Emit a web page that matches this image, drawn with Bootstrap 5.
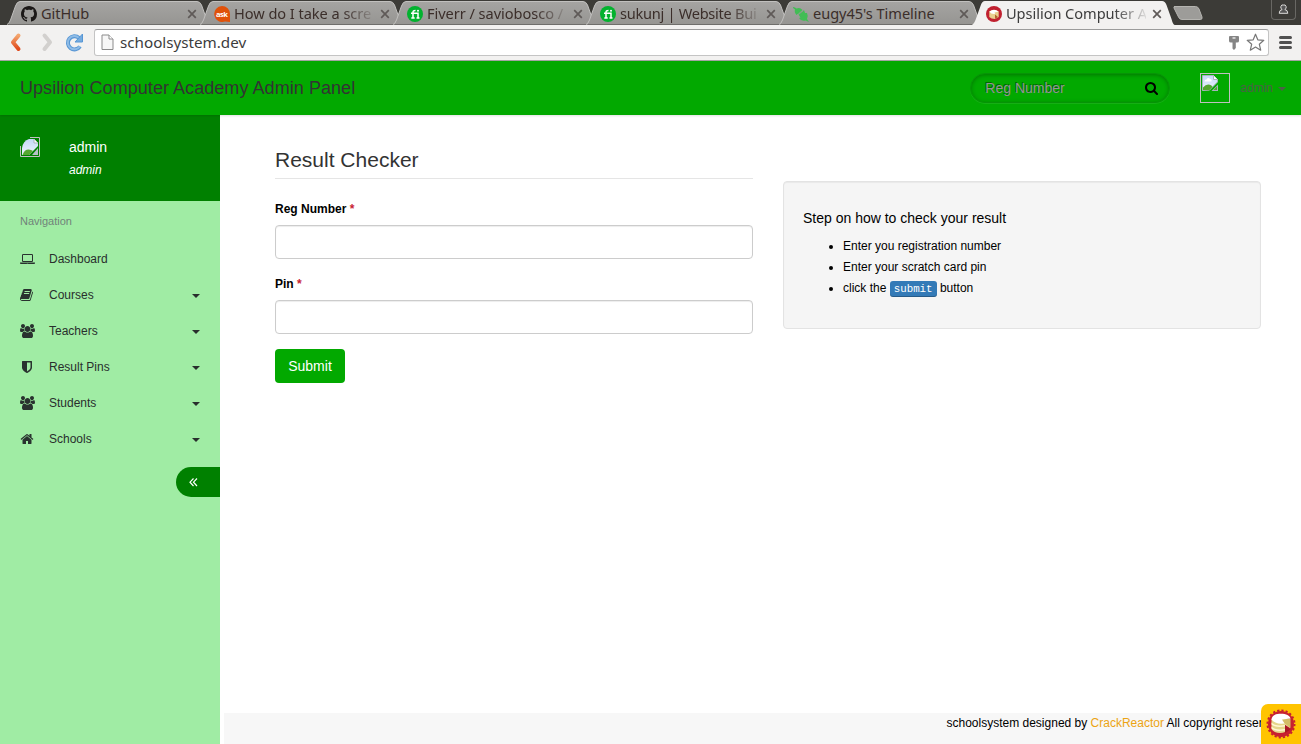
<!DOCTYPE html>
<html lang="en">
<head>
<meta charset="utf-8">
<meta name="viewport" content="width=device-width, initial-scale=1">
<title>Upsilion Computer Academy</title>
<link href="https://cdn.jsdelivr.net/npm/bootstrap@5.3.0/dist/css/bootstrap.min.css" rel="stylesheet">
<style>
html,body{height:100%}
body{font:12px/21px "Liberation Sans",Arial,sans-serif;color:#000;background:#fff;overflow:hidden}
svg{display:block;flex:none}
/* browser chrome */
.tabstrip{height:25px;background:#3c3b37;padding-left:7px;font:14.6px/19px "Noto Sans",sans-serif;color:#3b2e2a}
.browser-tab{width:193px;height:25px;position:relative;padding:2px 0 0 14px}
.browser-tab .shape{position:absolute;left:0;top:0;z-index:0}
.browser-tab>*:not(.shape){position:relative;z-index:1}
.tab-title{width:140px;margin-left:4px;margin-right:6px;white-space:nowrap;height:20px;letter-spacing:-.05px}
.tight{letter-spacing:-.28px}
.faded{-webkit-mask-image:linear-gradient(90deg,#000 108px,transparent 144px);mask-image:linear-gradient(90deg,#000 108px,transparent 144px)}
.browser-tab.current{z-index:3;color:#3c3c3c}
.user-btn{width:25px;height:20px;border:1px solid #696864;border-top:0;border-radius:0 0 4px 4px;margin-right:5px}
.toolbar{height:36px;background:#f2f1f0;border-bottom:1px solid #a5a5a5}
.omnibox{height:27px;border:1px solid #c4c4c4;border-top-color:#9b9b9b;border-radius:3px;background:#fff;margin:4px 10px 0 10px;font:15.2px/25px "Noto Sans",sans-serif;color:#3c3c3c;flex:1;padding:0 3px 0 6px}
/* app */
.topbar{height:54px;background:#02a900;color:#333;position:relative;z-index:2;box-shadow:0 1px 2px rgba(0,0,0,.12);padding-left:20px}
.brand-text{font-size:18px;line-height:54px;letter-spacing:.055px}
.search-pill{width:200px;height:30px;border-radius:15px;border:1px solid #079307;box-shadow:inset 0 1px 4px rgba(0,0,0,.3),0 1px 0 rgba(255,255,255,.08);padding:0 11px 0 14px;font-size:14px;color:#939393;text-shadow:-1px -1px 0 rgba(0,0,0,.4)}
.broken-frame{width:30px;height:30px;border:1px solid #c0c0c0;margin-left:30px;padding:1px}
.tri{width:0;height:0;border:4px solid transparent;border-top-color:currentColor;border-bottom:0}
.sidebar{width:220px;background:#a0eca4}
.profile{height:86px;background:#008000;color:#fff;padding:22px 20px}
.side-link{height:36px;padding:0 20px;color:#292f2d}
.side-link svg{margin-right:14px;fill:#29322f}
.side-link .tri{margin-top:2px}
.collapse-btn{width:44px;height:30px;background:#008000;border-radius:15px 0 0 15px;margin-top:10px;padding-left:13px}
.content-area{padding:33px 40px 0 55px}
.page-title{font-size:21px;line-height:24px;color:#333;border-bottom:1px solid #e5e5e5;padding-bottom:6px;margin:0 0 20px}
.field-label{font-weight:700;line-height:21px;margin-bottom:5px;display:block}
.field{height:34px;border:1px solid #ccc;border-radius:4px;box-shadow:inset 0 1px 1px rgba(0,0,0,.075);margin-bottom:15px;padding:0}
.btn-go{background:#02a900;color:#fff;font-size:14px;line-height:20px;padding:7px 13px;border:0;border-radius:4px;width:70px;height:34px}
.steps{height:148px;background:#f5f5f5;border:1px solid #e3e3e3;border-radius:4px;box-shadow:inset 0 1px 1px rgba(0,0,0,.05);margin-top:33px;padding:26px 19px}
.steps h2{font-size:14px;line-height:20px;margin:0 0 8px}
.key{font:10.8px/12px "Liberation Mono",monospace;background:#337ab7;color:#fff;border-radius:3px;padding:2px 4px;box-shadow:inset 0 -1px 0 rgba(0,0,0,.25)}
.page-foot{height:31px;background:#f7f7f7;margin-left:4px;padding-left:722.5px;white-space:nowrap}
.page-foot a{color:#eca413;text-decoration:none}
.cake-tab{position:absolute;right:0;bottom:0;width:40px;height:40px;background:#ffc400;border-radius:7px 0 0 0;z-index:5}
</style>
</head>
<body class="d-flex flex-column">
<svg width="0" height="0" style="position:absolute">
<defs>
<linearGradient id="tg" x1="0" y1="0" x2="0" y2="1"><stop offset="0" stop-color="#a5a4a2"/><stop offset="1" stop-color="#969592"/></linearGradient>
<linearGradient id="og" x1="0" y1="0" x2="0" y2="1"><stop offset="0" stop-color="#f3a56d"/><stop offset="1" stop-color="#e04a1c"/></linearGradient>
<linearGradient id="sky" x1="0" y1="0" x2="0" y2="1"><stop offset="0" stop-color="#c3d8f8"/><stop offset="1" stop-color="#eef4fd"/></linearGradient>
<symbol id="tab" viewBox="0 0 203 25"><path d="M0 24.500Q2 24 3.500 20L8.500 6Q10 1.500 13 1.500H190Q193 1.500 194.500 5L199.500 19Q201 24.500 203 24.500Z" fill="url(#tg)"/><path d="M0 24.500Q2 24 3.500 20L8.500 6Q10 1.500 13 1.500H190Q193 1.500 194.500 5L199.500 19Q201 24.500 203 24.500" fill="none" stroke="#c1c0be"/><path d="M2 24.500H203" stroke="#6f6e6b"/></symbol>
<symbol id="tabon" viewBox="0 0 203 25"><path d="M0 25Q2 24 3.500 20L8.500 6Q10 1 13 1H190Q193 1 194.500 5L199.500 19Q201 25 203 25Z" fill="#f2f1f0"/></symbol>
<symbol id="x" viewBox="0 0 10 10"><path d="M1.200 1.200L8.800 8.800M8.800 1.200L1.200 8.800" stroke="#5f5a58" stroke-width="1.700"/></symbol>
<symbol id="fi" viewBox="0 0 16 16"><circle cx="8" cy="8" r="8" fill="#02b22e"/><path d="M4 7.300H11V12M6 12V6.300Q6 4.500 8.500 4.600M4.300 12H7.700M9.500 12H12.500" fill="none" stroke="#fff" stroke-width="1.500"/><circle cx="11" cy="4.800" r="1" fill="#fff"/></symbol>
<symbol id="cake" viewBox="0 0 30 30"><circle cx="15" cy="15" r="13" fill="#c8202f"/><circle cx="15" cy="15" r="13.500" fill="none" stroke="#c8202f" stroke-width="2" stroke-dasharray="2.200 2.040"/><path d="M5.500 10V20Q8 24 14 24Q17 24 19 23V16L24 19V10Z" fill="#e5d68b"/><path d="M5.500 13.500Q9 17.500 19 16V17.500Q9 19 5.500 15.500ZM5.500 17.500Q9 21.500 19 20V21.500Q9 23 5.500 19.500Z" fill="#fff7d2"/><path d="M16 10.500L24.500 9.500V19L16 12Z" fill="#d3bd66"/><path d="M5.500 10.500C6 6 10 4.800 15 4.800S24 6.500 24.500 9.500L16 10.500L18.500 14.500Q9 15.500 5.500 10.500Z" fill="#fff"/><path d="M19 16L24.500 20.500L19 24Z" fill="#a81826"/></symbol>
<symbol id="users" viewBox="0 0 1920 1792"><path d="M593 896q-162 5-265 128h-134q-82 0-138-40.500t-56-118.500q0-353 124-353 6 0 43.500 21t97.500 42.500 119 21.500q67 0 133-23-5 37-5 66 0 139 81 256zm1071 637q0 120-73 189.500t-194 69.500h-874q-121 0-194-69.500t-73-189.500q0-53 3.500-103.500t14-109 26.500-108.500 43-97.500 62-81 85.500-53.500 111.500-20q10 0 43 21.500t73 48 107 48 135 21.500 135-21.500 107-48 73-48 43-21.500q61 0 111.500 20t85.500 53.500 62 81 43 97.500 26.500 108.500 14 109 3.500 103.500zm-1024-1277q0 106-75 181t-181 75-181-75-75-181 75-181 181-75 181 75 75 181zm704 384q0 159-112.500 271.500t-271.500 112.500-271.500-112.500-112.500-271.500 112.500-271.500 271.500-112.500 271.500 112.500 112.500 271.500zm576 225q0 78-56 118.500t-138 40.500h-134q-103-123-265-128 81-117 81-256 0-29-5-66 66 23 133 23 59 0 119-21.500t97.500-42.500 43.500-21q124 0 124 353zm-128-609q0 106-75 181t-181 75-181-75-75-181 75-181 181-75 181 75 75 181z"/></symbol>
<symbol id="broken" viewBox="0 0 16 16"><path d="M.5.500H11.500L15.500 4.500V7L7 15.500H.500Z" fill="url(#sky)" stroke="#a9b3bf"/><path d="M11.500.500V4.500H15.500" fill="#fff" stroke="#a9b3bf"/><path d="M2.500 6.500Q2.500 4.500 4.500 4.500Q6 2 8 4Q10 4 9.500 6.500Z" fill="#fff"/><path d="M1 15V12.500Q5 7.500 9.500 10.500L10.500 12L7 15.500Z" fill="#55a630"/><path d="M16 9.500V16H9.500Z" fill="#a9b3bf"/><path d="M15 11.500V15H11.500Z" fill="#55a630"/></symbol>
</defs></svg>

<div class="tabstrip d-flex align-items-start">
  <div class="browser-tab d-flex align-items-center"><svg class="shape" width="203" height="25"><use href="#tab"/></svg>
    <svg width="16" height="16" viewBox="0 0 16 16" fill="#1b1817"><path d="M8 0C3.580 0 0 3.580 0 8c0 3.540 2.290 6.530 5.470 7.590.4.070.55-.17.55-.38 0-.19-.01-.82-.01-1.490-2.010.37-2.530-.49-2.690-.94-.09-.23-.48-.94-.82-1.130-.28-.15-.68-.52-.01-.53.63-.01 1.080.58 1.230.82.72 1.210 1.870.87 2.330.66.070-.52.28-.87.51-1.070-1.780-.2-3.640-.89-3.640-3.950 0-.87.31-1.590.82-2.150-.08-.2-.36-1.020.08-2.120 0 0 .67-.21 2.200.82.64-.18 1.320-.27 2-.27s1.360.09 2 .27c1.530-1.040 2.200-.82 2.200-.82.44 1.100.16 1.920.08 2.120.51.56.82 1.270.82 2.150 0 3.070-1.870 3.750-3.650 3.950.29.25.54.73.54 1.480 0 1.070-.01 1.930-.01 2.200 0 .21.15.46.55.38A8.010 8.010 0 0 0 16 8c0-4.420-3.580-8-8-8"/></svg>
    <span class="tab-title">GitHub</span><svg width="10" height="10"><use href="#x"/></svg></div>
  <div class="browser-tab d-flex align-items-center"><svg class="shape" width="203" height="25"><use href="#tab"/></svg>
    <svg width="16" height="16" viewBox="0 0 16 16"><path d="M8 0A8 8 0 1 0 11 15.500L16 16V8A8 8 0 0 0 8 0Z" fill="#e05109"/><text x="8" y="10.500" font-family="Open Sans" font-size="7.500" font-weight="700" fill="#fff" text-anchor="middle" textLength="12">ask</text></svg>
    <span class="tab-title faded">How do I take a scre</span><svg width="10" height="10"><use href="#x"/></svg></div>
  <div class="browser-tab d-flex align-items-center"><svg class="shape" width="203" height="25"><use href="#tab"/></svg>
    <svg width="16" height="16"><use href="#fi"/></svg>
    <span class="tab-title faded">Fiverr / saviobosco /</span><svg width="10" height="10"><use href="#x"/></svg></div>
  <div class="browser-tab d-flex align-items-center"><svg class="shape" width="203" height="25"><use href="#tab"/></svg>
    <svg width="16" height="16"><use href="#fi"/></svg>
    <span class="tab-title tight faded">sukunj | Website Bui</span><svg width="10" height="10"><use href="#x"/></svg></div>
  <div class="browser-tab d-flex align-items-center"><svg class="shape" width="203" height="25"><use href="#tab"/></svg>
    <svg width="16" height="16" viewBox="0 0 16 16" fill="#42bd55"><path d="M0 1L2 1.500L3.500 2.500Q7 1 9.500 4L3.500 9Q1 6 2 3.500L0 2ZM5 8L11 4L12 7L14 7Q15.500 10 14 13L16 16L12.500 14.500Q8 15.500 6 12L7.500 11.500Z"/><path d="M4 9.500L10.500 4.500" stroke="#9b9a97" stroke-width=".8"/></svg>
    <span class="tab-title">eugy45's Timeline</span><svg width="10" height="10"><use href="#x"/></svg></div>
  <div class="browser-tab current d-flex align-items-center"><svg class="shape" width="203" height="25"><use href="#tabon"/></svg>
    <svg width="16" height="16" viewBox="0 0 16 16"><circle cx="8" cy="8" r="8" fill="#c0202f"/><path d="M3.300 5.500Q8 2.500 12.700 5.500V11L9 13Q5 13 3.300 11Z" fill="#e9d08f"/><path d="M3.300 5.500Q8 1.800 12.700 5.500L8.500 6.500L9 8Q5 8.300 3.300 5.500Z" fill="#fff"/><path d="M9 8.500L12 11L9 13Z" fill="#b3602c"/></svg>
    <span class="tab-title faded">Upsilion Computer A</span><svg width="10" height="10"><use href="#x"/></svg></div>
  <svg width="34" height="25" style="margin-left:7px"><path d="M3 6.500H24.500Q27 6.500 28 9L31 17Q31.500 19.500 29.500 19.500H11Q8.500 19.500 7.500 17L3 8Q2.500 6.500 4 6.500Z" fill="#9d9c99" stroke="#b5b4b0" transform="translate(-1 0)"/></svg>
  <div class="user-btn ms-auto d-flex justify-content-center"><svg width="11" height="11" viewBox="0 0 11 11" style="margin-top:4px"><path d="M5.500 1A2 2.300 0 0 1 6.800 5.500Q9.800 6 9.800 9.300H1.200Q1.200 6 4.200 5.500A2 2.300 0 0 1 5.500 1Z" fill="#555" stroke="#dedddb"/></svg></div>
</div>

<div class="toolbar d-flex align-items-start">
  <svg width="84" height="35" viewBox="0 0 84 35"><path d="M18.500 10.500L13 17.200L18.500 24" fill="none" stroke="url(#og)" stroke-width="4" stroke-linecap="round" stroke-linejoin="round"/><path d="M44.500 10.500L50 17.200L44.500 24" fill="none" stroke="#d2d0ce" stroke-width="4" stroke-linecap="round" stroke-linejoin="round"/><path d="M80 21.500A6.600 6.600 0 1 1 79 13" fill="none" stroke="#5796d4" stroke-width="4"/><path d="M79.900 21.300A6.600 6.600 0 1 1 79 13" fill="none" stroke="#8fbce6" stroke-width="2"/><path d="M82.500 9V17H75Z" fill="#74abdf" stroke="#5796d4" stroke-linejoin="round"/></svg>
  <div class="omnibox d-flex align-items-center">
    <svg width="13" height="17" viewBox="0 0 13 17"><path d="M1 1H8L12 5V15.500H1Z" fill="#f7f7f7" stroke="#8b8b8b"/><path d="M8 1V5H12" fill="#fff" stroke="#8b8b8b"/></svg>
    <span style="margin-left:6px">schoolsystem.dev</span>
    <svg class="ms-auto" width="12" height="16" viewBox="0 0 12 16"><path d="M2 1H10Q11 1 11 2V6Q11 7.500 9 7.500H7.800V13L6 15L4.500 13.500V7.500H3Q1 7.500 1 6V2Q1 1 2 1Z" fill="#858585"/><path d="M4.500 3H7.500" stroke="#fff" stroke-width="1.200"/></svg>
    <svg width="19" height="19" viewBox="0 0 19 19" style="margin-left:6px"><path d="M9.500 1.200L11.800 6.800L17.800 7.300L13.300 11.200L14.700 17.200L9.500 14L4.300 17.200L5.700 11.200L1.200 7.300L7.200 6.800Z" fill="#fff" stroke="#777" stroke-width="1.200" stroke-linejoin="round"/></svg>
  </div>
  <svg width="22" height="35" viewBox="0 0 22 35"><path d="M1.500 12.500H11.500M1.500 17.500H11.500M1.500 22.500H11.500" stroke="#505050" stroke-width="3" stroke-linecap="round"/></svg>
</div>

<nav class="topbar d-flex align-items-center">
  <span class="brand-text">Upsilion Computer Academy Admin Panel</span>
  <div class="search-pill d-flex align-items-center justify-content-between ms-auto"><span>Reg Number</span><svg width="13" height="13" viewBox="64 128 1664 1664"><path d="M1216 832q0-185-131.500-316.500t-316.500-131.500-316.500 131.500-131.500 316.500 131.500 316.500 316.500 131.500 316.500-131.500 131.500-316.500zm512 832q0 52-38 90t-90 38q-54 0-90-38l-343-342q-179 124-399 124-143 0-273.500-55.500t-225-150-150-225-55.500-273.500 55.500-273.500 150-225 225-150 273.500-55.500 273.500 55.500 225 150 150 225 55.500 273.500q0 220-124 399l343 343q37 37 37 90z"/></svg></div>
  <div class="broken-frame"><svg width="16" height="16"><use href="#broken"/></svg></div>
  <span class="d-flex align-items-center" style="margin-left:10px;margin-right:15px;color:#4c6147">admin<span class="tri" style="margin-left:5px;margin-top:2px"></span></span>
</nav>

<div class="d-flex flex-grow-1">
  <aside class="sidebar d-flex flex-column flex-shrink-0">
    <div class="profile d-flex">
      <svg width="20" height="20" viewBox="0 0 20 20"><path d="M.5 9V19.500H19.500V.500H10" fill="none" stroke="#c0c0c0"/><path d="M2 18V11Q3 4 9 2H14L18 6V9L9 18Z" fill="url(#sky)"/><path d="M14 2V6H18" fill="#fff" stroke="#a9b3bf"/><path d="M2.500 18Q5 11 11 13L13 14L9 18Z" fill="#55a630"/><path d="M18 11V18H12Z" fill="#b6c0c6"/></svg>
      <div style="margin-left:29px"><div style="font-size:14px;line-height:20px">admin</div><div class="fst-italic" style="line-height:20px;margin-top:3px">admin</div></div>
    </div>
    <div style="font-size:11px;line-height:20px;padding:10px 20px;color:#70837a">Navigation</div>
    <div class="side-link d-flex align-items-center"><svg width="15" height="14" viewBox="0 0 1920 1792"><path d="M416 1280q-66 0-113-47t-47-113v-704q0-66 47-113t113-47h1088q66 0 113 47t47 113v704q0 66-47 113t-113 47h-1088zm-32-864v704q0 13 9.500 22.500t22.500 9.500h1088q13 0 22.500-9.500t9.500-22.500v-704q0-13-9.500-22.500t-22.500-9.500h-1088q-13 0-22.500 9.500t-9.500 22.500zm1376 928h160v96q0 40-47 68t-113 28h-1600q-66 0-113-28t-47-68v-96h1760zm-720 96q16 0 16-16t-16-16h-160q-16 0-16 16t16 16h160z"/></svg>Dashboard</div>
    <div class="side-link d-flex align-items-center"><svg width="15" height="14" viewBox="64 0 1792 1792"><path d="M1639 478q40 57 18 129l-275 906q-19 64-76.500 107.500t-122.500 43.500h-923q-77 0-148.500-53.500t-99.500-131.500q-24-67-2-127 0-4 3-27t4-37q1-8-3-21.500t-3-19.500q2-11 8-21t16.500-23.500 16.500-23.500q23-38 45-91.500t30-91.500q3-10 .5-30t-.5-28q3-11 17-28t17-23q21-36 42-92t25-90q1-9-2.500-32t.5-28q4-13 22-30.500t22-22.500q19-26 42.500-84.500t27.500-96.500q1-8-3-25.500t-2-26.500q2-8 9-18t18-23 17-21q8-12 16.500-30.500t15-35 16-36 19.500-32 26.500-23.500 36-11.500 47.500 5.500l-1 3q38-9 51-9h761q74 0 114 56t18 130l-274 906q-36 119-71.500 153.500t-128.500 34.500h-869q-27 0-38 15-11 16-1 43 24 70 144 70h923q29 0 56-15.500t35-41.500l300-987q7-22 5-57 38 15 59 43zm-1064 2q-4 13 2 22.500t20 9.500h608q13 0 25.500-9.500t16.500-22.500l21-64q4-13-2-22.500t-20-9.500h-608q-13 0-25.500 9.500t-16.500 22.500zm-83 256q-4 13 2 22.500t20 9.500h608q13 0 25.500-9.500t16.500-22.500l21-64q4-13-2-22.500t-20-9.500h-608q-13 0-25.500 9.500t-16.500 22.500z"/></svg>Courses<span class="tri ms-auto"></span></div>
    <div class="side-link d-flex align-items-center"><svg width="15" height="14"><use href="#users"/></svg>Teachers<span class="tri ms-auto"></span></div>
    <div class="side-link d-flex align-items-center"><svg width="15" height="14" viewBox="64 0 1792 1792"><path d="M1344 960v-640h-448v1137q119-63 213-137 235-184 235-360zm192-768v768q0 86-33.500 170.500t-83 150-118 127.500-126.500 103-121 77.500-89.500 49.500-42.500 20q-12 6-26 6t-26-6q-16-7-42.500-20t-89.500-49.500-121-77.500-126.500-103-118-127.500-83-150-33.500-170.500v-768q0-26 19-45t45-19h1152q26 0 45 19t19 45z"/></svg>Result Pins<span class="tri ms-auto"></span></div>
    <div class="side-link d-flex align-items-center"><svg width="15" height="14"><use href="#users"/></svg>Students<span class="tri ms-auto"></span></div>
    <div class="side-link d-flex align-items-center"><svg width="15" height="14" viewBox="64 0 1792 1792"><path d="M1472 992v480q0 26-19 45t-45 19h-384v-384h-256v384h-384q-26 0-45-19t-19-45v-480q0-1 .5-3t.5-3l575-474 575 474q1 2 1 6zm223-69l-62 74q-8 9-21 11h-3q-13 0-21-7l-692-577-692 577q-12 8-24 7-13-2-21-11l-62-74q-8-10-7-23.500t11-21.500l719-599q32-26 76-26t76 26l244 204v-195q0-14 9-23t23-9h192q14 0 23 9t9 23v408l219 182q10 8 11 21.500t-7 23.500z"/></svg>Schools<span class="tri ms-auto"></span></div>
    <div class="collapse-btn align-self-end d-flex align-items-center"><svg width="9" height="10" viewBox="0 0 9 10"><path d="M4.500 1.500L1 5.200L4.500 9M8 1.500L4.500 5.200L8 9" fill="none" stroke="#fff" stroke-width="1.200"/></svg></div>
  </aside>
  <div class="d-flex flex-column flex-grow-1 overflow-hidden">
    <main class="content-area flex-grow-1">
      <div class="row" style="--bs-gutter-x:30px">
        <form class="col-6">
          <h1 class="page-title fw-normal">Result Checker</h1>
          <label class="field-label" for="reg">Reg Number <span style="color:#c82333">*</span></label>
          <input id="reg" class="field form-control" type="text">
          <label class="field-label" for="pin">Pin <span style="color:#c82333">*</span></label>
          <input id="pin" class="field form-control" type="text">
          <button class="btn btn-go" type="button">Submit</button>
        </form>
        <div class="col-6">
          <section class="steps">
            <h2 class="fw-normal">Step on how to check your result</h2>
            <ul class="mb-0" style="padding-left:40px"><li>Enter you registration number</li><li>Enter your scratch card pin</li><li>click the <span class="key">submit</span> button</li></ul>
          </section>
        </div>
      </div>
    </main>
    <footer class="page-foot">schoolsystem designed by <a href="#">CrackReactor</a> All copyright reserved</footer>
  </div>
</div>
<div class="cake-tab d-flex align-items-center justify-content-center"><svg width="30" height="30"><use href="#cake"/></svg></div>
<script src="https://cdn.jsdelivr.net/npm/bootstrap@5.3.0/dist/js/bootstrap.bundle.min.js"></script>
</body>
</html>
